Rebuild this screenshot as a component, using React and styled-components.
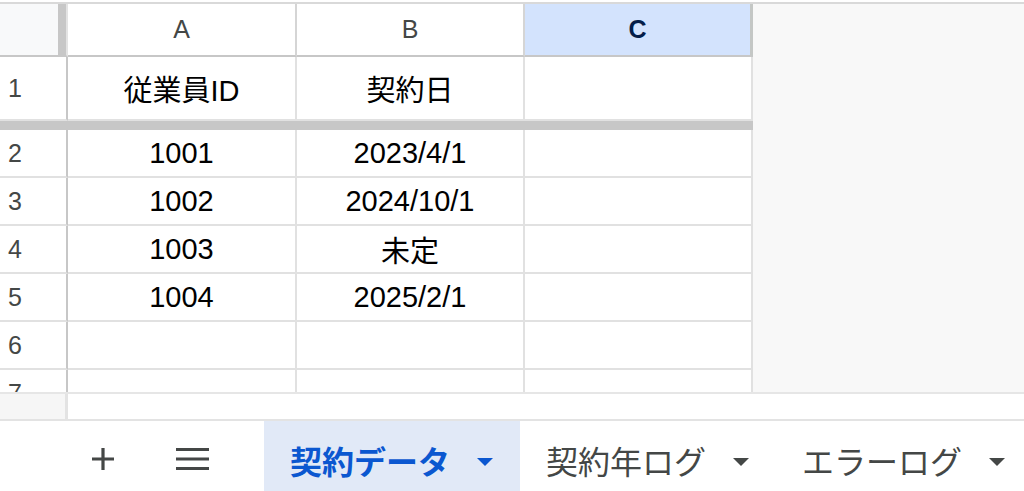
import React from "react";
import styled, { createGlobalStyle } from "styled-components";

const Global = createGlobalStyle`
  html, body {
    margin: 0;
    padding: 0;
    background: #ffffff;
  }
  body {
    font-family: "Liberation Sans", "Noto Sans CJK JP", sans-serif;
  }
`;

const Page = styled.div`
  width: 1024px;
  height: 491px;
  display: flex;
  flex-direction: column;
  overflow: hidden;
  background: #ffffff;
`;

const SheetArea = styled.div`
  display: flex;
  height: 392px;
  padding-top: 2px;
  box-sizing: border-box;
`;

const SheetInner = styled.div`
  display: flex;
  flex: 1;
  border-top: 2px solid #d9d9d9;
  overflow: hidden;
`;

const Grid = styled.div`
  display: grid;
  grid-template-columns: 68px 229px 228px 228px;
  grid-template-rows: 53px 64px 9px repeat(6, 48px);
  width: 753px;
  flex-shrink: 0;
  overflow: hidden;
`;

const Blank = styled.div`
  flex: 1;
  background: #f8f8f8;
`;

const Corner = styled.div`
  background: #f8f9fa;
  border-right: 2px solid #e3e3e3;
  border-bottom: 2px solid #c7c7c7;
  box-shadow: inset -8px 0 0 #c7c7c7;
`;

const ColHead = styled.div`
  display: flex;
  align-items: center;
  justify-content: center;
  background: ${(p) => (p.$active ? "#d3e3fd" : "#ffffff")};
  color: ${(p) => (p.$active ? "#041e49" : "#444746")};
  font-weight: ${(p) => (p.$active ? 700 : 400)};
  font-size: 25px;
  border-right: ${(p) => (p.$active ? "3px solid #c4c7c5" : "2px solid #d5d5d5")};
  border-bottom: 2px solid #c7c7c7;
`;

const RowNum = styled.div`
  display: flex;
  align-items: center;
  padding-left: 8px;
  font-size: 25px;
  color: #444746;
  background: #ffffff;
  border-right: 2px solid #c7c7c7;
  border-bottom: 2px solid #e1e1e1;
`;

const Cell = styled.div`
  display: flex;
  align-items: center;
  justify-content: center;
  font-size: 29px;
  color: #000000;
  background: #ffffff;
  border-right: 2px solid #e1e1e1;
  border-bottom: 2px solid #e1e1e1;
  white-space: nowrap;
`;

const FreezeBar = styled.div`
  grid-column: 1 / -1;
  background: #c7c7c7;
`;

const ScrollStrip = styled.div`
  display: flex;
  height: 29px;
  border-top: 2px solid #e6e6e6;
  border-bottom: 2px solid #e3e3e3;
  box-sizing: border-box;
`;

const ScrollStub = styled.div`
  width: 68px;
  background: #f6f6f6;
  border-right: 3px solid #e3e3e3;
  box-sizing: border-box;
`;

const TabBar = styled.div`
  flex: 1;
  display: flex;
  align-items: stretch;
  padding-left: 64px;
  background: #ffffff;
`;

const IconButton = styled.div`
  display: flex;
  align-items: center;
  justify-content: center;
  flex-shrink: 0;
  width: ${(p) => p.$w}px;
  margin-right: ${(p) => p.$gap || 0}px;
  padding-top: 6px;
  color: #444746;
`;

const Tab = styled.div`
  display: flex;
  align-items: center;
  flex-shrink: 0;
  gap: 27px;
  padding: 7px 27px 0 26px;
  background: ${(p) => (p.$active ? "#e1e9f7" : "transparent")};
  color: ${(p) => (p.$active ? "#0b57d0" : "#444746")};
  font-weight: ${(p) => (p.$active ? 700 : 400)};
  font-size: 32px;
  white-space: nowrap;
`;

const Caret = styled.span`
  width: 0;
  height: 0;
  border-left: 8px solid transparent;
  border-right: 8px solid transparent;
  border-top: 8px solid ${(p) => (p.$active ? "#0b57d0" : "#444746")};
  margin-top: 4px;
`;

const rows = [
  ["2", "1001", "2023/4/1"],
  ["3", "1002", "2024/10/1"],
  ["4", "1003", "未定"],
  ["5", "1004", "2025/2/1"],
  ["6", "", ""],
  ["7", "", ""],
];

const PlusIcon = () => (
  <svg width="24" height="24" viewBox="0 0 24 24">
    <path d="M12 1v22M1 12h22" stroke="currentColor" strokeWidth="3.2" fill="none" />
  </svg>
);

const MenuIcon = () => (
  <svg width="33" height="24" viewBox="0 0 33 24">
    <path d="M0 2.5h33M0 12h33M0 21.5h33" stroke="currentColor" strokeWidth="3" fill="none" />
  </svg>
);

const tabs = [
  { name: "契約データ", active: true },
  { name: "契約年ログ" },
  { name: "エラーログ" },
];

export default function App() {
  return (
    <Page>
      <Global />
      <SheetArea>
        <SheetInner>
          <Grid>
            <Corner />
            <ColHead>A</ColHead>
            <ColHead>B</ColHead>
            <ColHead $active>C</ColHead>

            <RowNum>1</RowNum>
            <Cell>従業員ID</Cell>
            <Cell>契約日</Cell>
            <Cell />

            <FreezeBar />

            {rows.map(([n, a, b]) => (
              <React.Fragment key={n}>
                <RowNum>{n}</RowNum>
                <Cell>{a}</Cell>
                <Cell>{b}</Cell>
                <Cell />
              </React.Fragment>
            ))}
          </Grid>
          <Blank />
        </SheetInner>
      </SheetArea>
      <ScrollStrip>
        <ScrollStub />
      </ScrollStrip>
      <TabBar>
        <IconButton $w={78}>
          <PlusIcon />
        </IconButton>
        <IconButton $w={100} $gap={22}>
          <MenuIcon />
        </IconButton>
        {tabs.map((t) => (
          <Tab key={t.name} $active={t.active}>
            {t.name}
            <Caret $active={t.active} />
          </Tab>
        ))}
      </TabBar>
    </Page>
  );
}
